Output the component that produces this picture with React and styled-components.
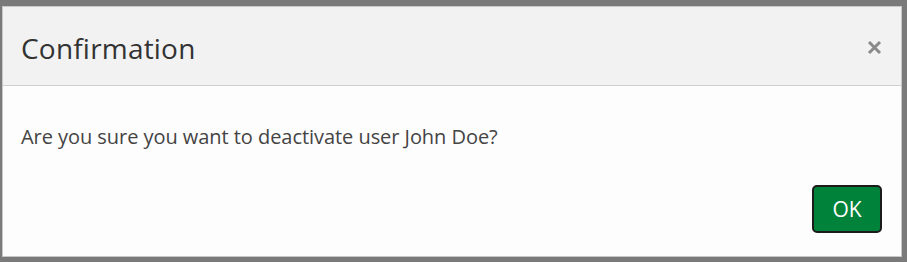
import React from "react";
import styled, { createGlobalStyle } from "styled-components";

const Global = createGlobalStyle`
  html, body { margin: 0; padding: 0; background: #7a7a7a; }
  body { font-family: "Open Sans", "Noto Sans", sans-serif; }
`;

const Backdrop = styled.div`
  width: 907px;
  height: 262px;
  box-sizing: border-box;
  padding: 6px 5px 5px 2px;
  display: flex;
`;

const Dialog = styled.div`
  flex: 1;
  display: flex;
  flex-direction: column;
  background: #fdfdfd;
  border: 1px solid #c8c8c8;
  box-sizing: border-box;
`;

const Header = styled.div`
  height: 79px;
  box-sizing: border-box;
  background: #f2f2f2;
  border-bottom: 1px solid #cfcfcf;
  display: flex;
  align-items: center;
  justify-content: space-between;
  padding: 3px 18px 0 18px;
`;

const Title = styled.h1`
  margin: 0;
  font-size: 28px;
  font-weight: 400;
  color: #333;
  letter-spacing: 0.2px;
`;

const Close = styled.button`
  border: 0;
  background: none;
  padding: 0;
  width: 18px;
  height: 18px;
  display: flex;
  align-items: center;
  justify-content: center;
  cursor: pointer;
`;

const Body = styled.div`
  padding: 37px 18px 0;
  font-size: 20px;
  color: #444;
  letter-spacing: -0.05px;
`;

const Footer = styled.div`
  margin-top: auto;
  display: flex;
  justify-content: flex-end;
  padding: 0 19px 23px;
`;

const OkButton = styled.button`
  width: 70px;
  height: 48px;
  box-sizing: border-box;
  background: #01823b;
  border: 2px solid #1b1b1b;
  border-radius: 5px;
  color: #fff;
  font-family: "Open Sans", "Noto Sans", sans-serif;
  font-size: 21px;
  cursor: pointer;
`;

export default function App() {
  return (
    <>
      <Global />
      <Backdrop>
        <Dialog>
          <Header>
            <Title>Confirmation</Title>
            <Close aria-label="Close">
              <svg width="15" height="15" viewBox="0 0 15 15">
                <path d="M2 2 L13 13 M13 2 L2 13" stroke="#8a8a8a" strokeWidth="3" />
              </svg>
            </Close>
          </Header>
          <Body>Are you sure you want to deactivate user John Doe?</Body>
          <Footer>
            <OkButton>OK</OkButton>
          </Footer>
        </Dialog>
      </Backdrop>
    </>
  );
}
